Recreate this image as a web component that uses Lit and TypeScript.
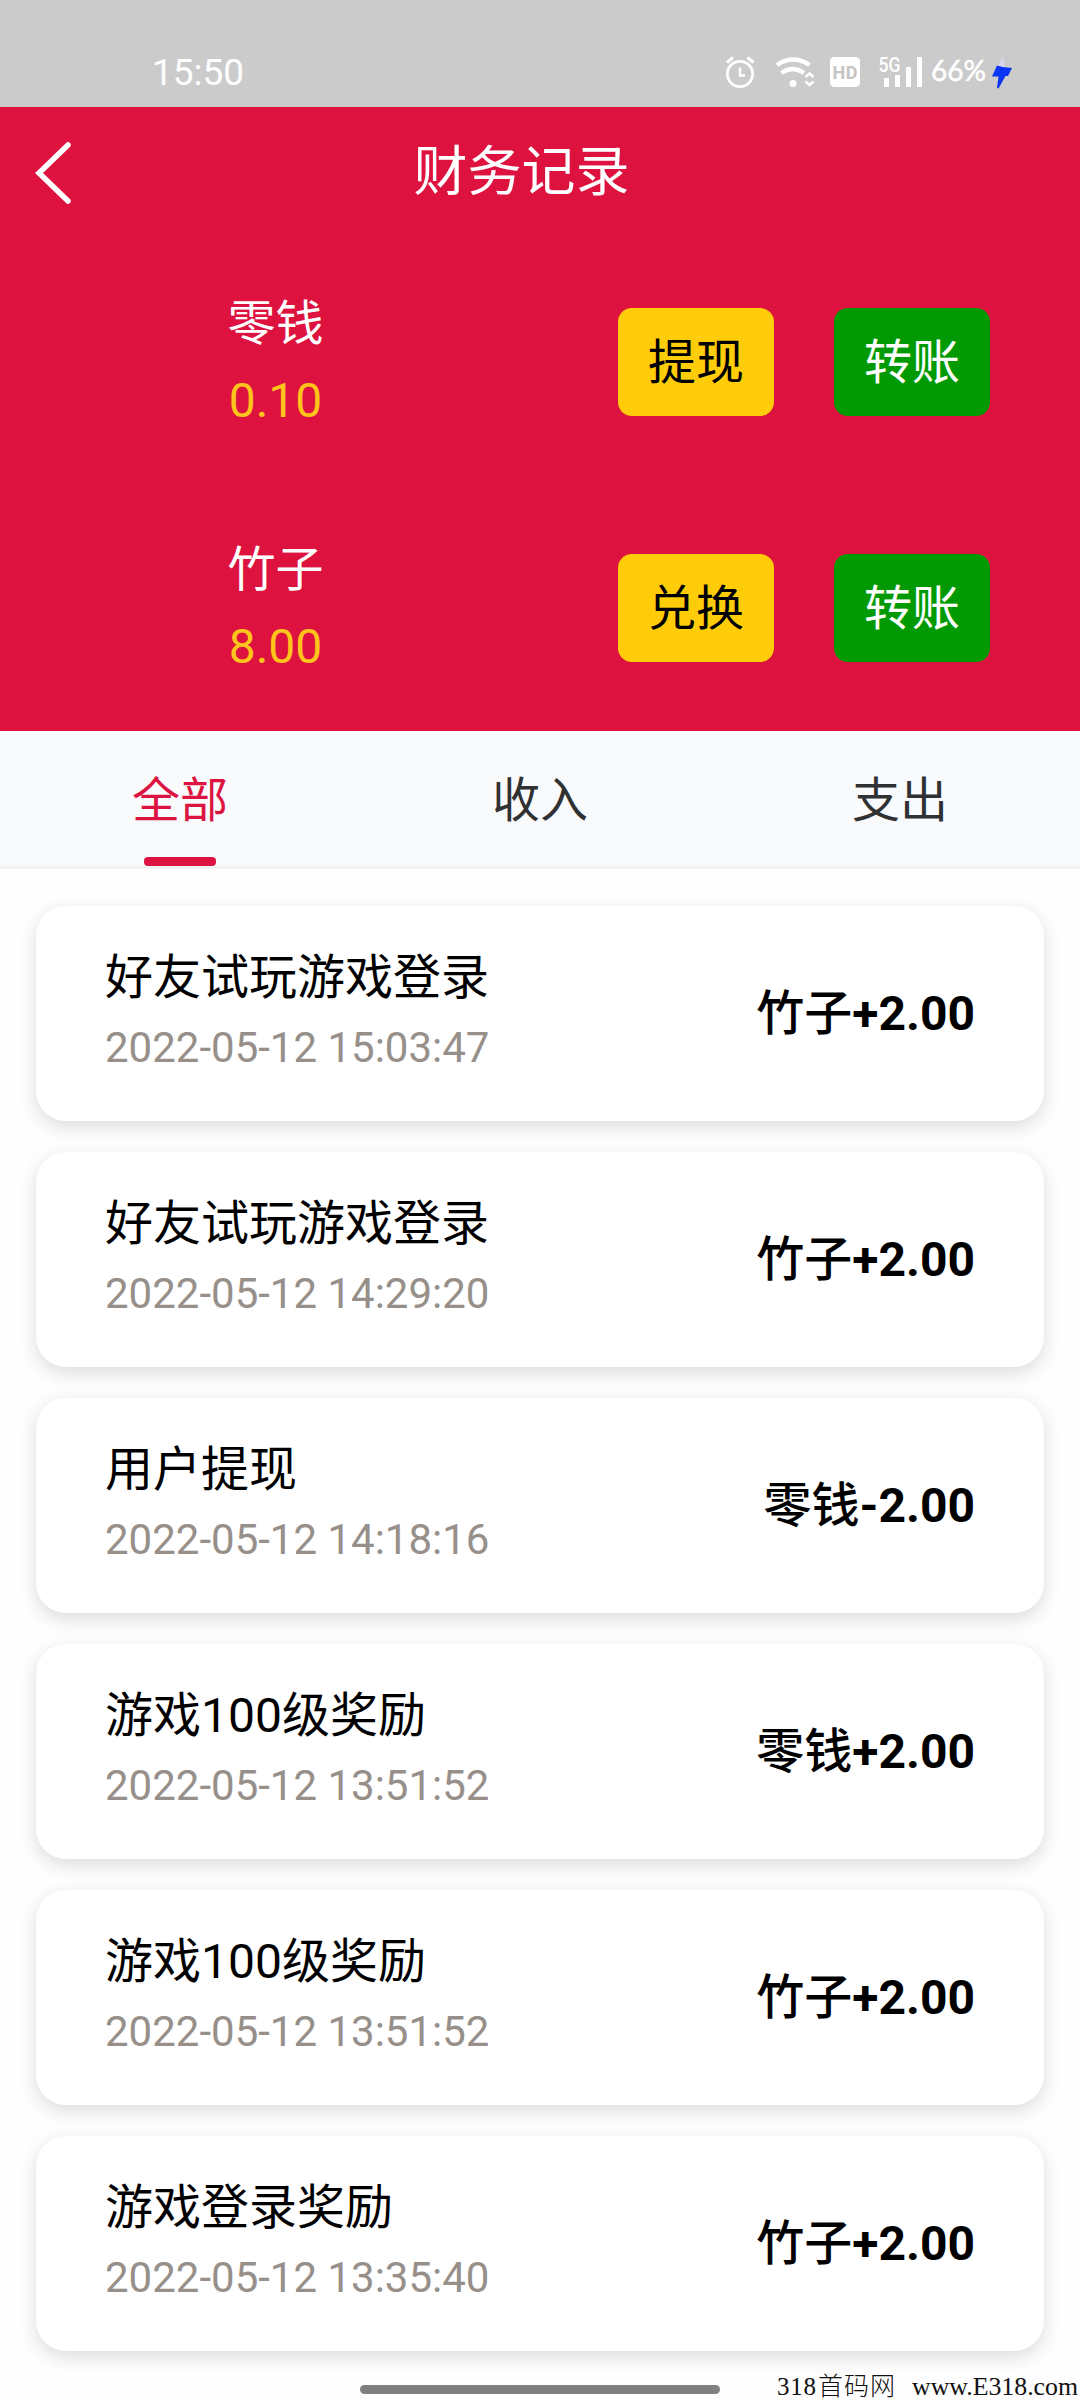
import { LitElement, html, svg, css } from "lit";
import { customElement, state } from "lit/decorators.js";

interface Account {
  name: string;
  balance: string;
  action: string;
}

interface Entry {
  title: string;
  time: string;
  amount: string;
}

const ACCOUNTS: Account[] = [
  { name: "零钱", balance: "0.10", action: "提现" },
  { name: "竹子", balance: "8.00", action: "兑换" },
];

const TABS = ["全部", "收入", "支出"];

const ENTRIES: Entry[] = [
  { title: "好友试玩游戏登录", time: "2022-05-12 15:03:47", amount: "竹子+2.00" },
  { title: "好友试玩游戏登录", time: "2022-05-12 14:29:20", amount: "竹子+2.00" },
  { title: "用户提现", time: "2022-05-12 14:18:16", amount: "零钱-2.00" },
  { title: "游戏100级奖励", time: "2022-05-12 13:51:52", amount: "零钱+2.00" },
  { title: "游戏100级奖励", time: "2022-05-12 13:51:52", amount: "竹子+2.00" },
  { title: "游戏登录奖励", time: "2022-05-12 13:35:40", amount: "竹子+2.00" },
];

@customElement("status-bar")
class StatusBar extends LitElement {
  static styles = css`
    :host {
      display: flex;
      justify-content: space-between;
      align-items: flex-end;
      box-sizing: border-box;
      height: 107px;
      padding: 0 60px 8px 152px;
      background: #cbcbcb;
      color: #fff;
    }
    .clock {
      font-size: 37px;
      line-height: 53px;
    }
    .icons {
      display: block;
      width: 320px;
      height: 60px;
    }
    .hd {
      font: 700 18px "Roboto", sans-serif;
      fill: #c4c4c4;
    }
    .net {
      font: 500 20px "Roboto", sans-serif;
      fill: #fff;
    }
    .pct {
      font: 400 28px "Lato", "Roboto", sans-serif;
      fill: #fff;
      stroke: #fff;
      stroke-width: 0.5;
    }
  `;

  render() {
    return html`
      <span class="clock">15:50</span>
      <svg class="icons" viewBox="700 39 320 60">
        ${svg`
          <g fill="none" stroke="#fff" stroke-width="2.8">
            <circle cx="740" cy="74" r="12.6" />
            <path d="M740 67.5v8h5" stroke-width="2.4" />
            <path d="M727 62.5l6-5M753.5 62.5l-6-5" stroke-width="3" />
            <path d="M777 65q16-11 32.500 0" stroke-width="4.200" />
            <path d="M781.500 73q11-8 22.500 0" stroke-width="4.200" />
            <path d="M805.500 77l4-3.500l4 3.500M805.500 81.500l4 3.500l4-3.500" stroke-width="2.800" />
          </g>
          <circle cx="793" cy="83.500" r="3.500" fill="#fff" />
          <rect x="830" y="57" width="30" height="30" rx="4.500" fill="#fff" />
          <text class="hd" x="832.500" y="78.500" textLength="25">HD</text>
          <text class="net" x="878.500" y="71.500" textLength="22" lengthAdjust="spacingAndGlyphs">5G</text>
          <g fill="#fff">
            <rect x="884" y="78" width="5" height="9" />
            <rect x="895" y="75" width="5" height="12" />
            <rect x="906" y="67" width="5" height="20" />
            <rect x="917" y="57" width="5" height="30" />
          </g>
          <text class="pct" x="931" y="81" textLength="55" lengthAdjust="spacingAndGlyphs">66%</text>
          <path d="M1003 56l2 12l-7-2z" fill="#d9d5ee" />
          <path d="M997 65.500l5.500 1.500l9.500 1l-4 8h-2.500l-7 12.500l-1.500-.500l1.500-11.500h-6.500z" fill="#0b35f5" />
        `}
      </svg>
    `;
  }
}

@customElement("account-row")
class AccountRow extends LitElement {
  static properties = { account: { attribute: false } };
  declare account: Account;

  static styles = css`
    :host {
      display: flex;
      align-items: center;
      justify-content: space-between;
      height: 246px;
      padding-right: 90px;
      font-size: 48px;
    }
    .info {
      width: 551px;
      text-align: center;
      line-height: 77px;
    }
    .name {
      color: #fff;
    }
    .balance {
      color: #fdc41c;
    }
    .actions {
      display: flex;
      gap: 60px;
    }
    .btn {
      width: 156px;
      height: 108px;
      padding: 2px 0 0;
      border: 0;
      border-radius: 14px;
      font: inherit;
      line-height: 106px;
      text-align: center;
    }
    .primary {
      background: #fecc09;
      color: #000;
    }
    .transfer {
      background: #029a04;
      color: #fff;
    }
  `;

  render() {
    return html`
      <div class="info">
        <div class="name">${this.account.name}</div>
        <div class="balance">${this.account.balance}</div>
      </div>
      <div class="actions">
        <button class="btn primary">${this.account.action}</button>
        <button class="btn transfer">转账</button>
      </div>
    `;
  }
}

@customElement("entry-card")
class EntryCard extends LitElement {
  static properties = { entry: { attribute: false } };
  declare entry: Entry;

  static styles = css`
    :host {
      display: flex;
      align-items: center;
      justify-content: space-between;
      box-sizing: border-box;
      height: 215px;
      padding: 0 69px 0 69px;
      border-radius: 30px;
      background: #fff;
      box-shadow: 0 6px 18px rgba(20, 24, 40, 0.15);
    }
    .info {
      padding-bottom: 2px;
    }
    .title {
      font-size: 48px;
      line-height: 70px;
      color: #000;
    }
    .time {
      font-size: 42px;
      line-height: 70px;
      color: #968f8a;
    }
    .amount {
      font-size: 48px;
      font-weight: 700;
      line-height: 70px;
      color: #000;
    }
    .unit {
      font-weight: 500;
    }
  `;

  render() {
    const { title, time, amount } = this.entry;
    return html`
      <div class="info">
        <div class="title">${title}</div>
        <div class="time">${time}</div>
      </div>
      <div class="amount"><span class="unit">${amount.slice(0, 2)}</span>${amount.slice(2)}</div>
    `;
  }
}

@customElement("app-root")
class AppRoot extends LitElement {
  @state() private active = 0;

  static styles = css`
    :host {
      display: block;
      position: relative;
      width: 1080px;
      height: 2400px;
      overflow: hidden;
      background: #fefefe;
      font-family: "Roboto", "Noto Sans CJK SC", sans-serif;
    }
    .header {
      background: #de123f;
    }
    .nav {
      display: grid;
      grid-template-columns: 100px 1fr 137px;
      align-items: center;
      height: 132px;
    }
    .back {
      display: block;
      width: 36px;
      height: 62px;
      margin-left: 35px;
    }
    .heading {
      margin: 0;
      font-size: 54px;
      font-weight: 400;
      line-height: 132px;
      text-align: center;
      color: #fff;
    }
    .tabs {
      display: grid;
      grid-template-columns: repeat(3, 1fr);
      box-sizing: border-box;
      height: 138px;
      border-bottom: 3px solid #f3f2f3;
      background: #f9fafc;
    }
    .tab {
      display: flex;
      flex-direction: column;
      align-items: center;
      padding-top: 14px;
      font-size: 48px;
      line-height: 112px;
      color: #303133;
    }
    .tab.active {
      color: #dc1441;
    }
    .tab.active::after {
      content: "";
      width: 72px;
      height: 9px;
      border-radius: 4px;
      background: #dc1441;
    }
    .list {
      display: flex;
      flex-direction: column;
      gap: 31px;
      padding: 37px 36px 0;
    }
    .home {
      position: absolute;
      left: 360px;
      top: 2385px;
      width: 360px;
      height: 9px;
      border-radius: 5px;
      background: #808080;
    }
    .mark {
      position: absolute;
      right: 0;
      bottom: 0;
      width: 310px;
      height: 40px;
      overflow: visible;
      font-family: "Liberation Serif", "Noto Sans CJK SC", serif;
      font-size: 25px;
      fill: #111;
    }
    .han {
      font-weight: 300;
    }
  `;

  render() {
    return html`
      <status-bar></status-bar>
      <div class="header">
        <div class="nav">
          <svg class="back" viewBox="0 0 36 62">
            <path d="M33 3L4 31L33 59" fill="none" stroke="#fff" stroke-width="5.500" stroke-linecap="round" />
          </svg>
          <h1 class="heading">财务记录</h1>
        </div>
        ${ACCOUNTS.map((a) => html`<account-row .account=${a}></account-row>`)}
      </div>
      <div class="tabs">
        ${TABS.map(
          (label, i) => html`
            <div class="tab ${i === this.active ? "active" : ""}" @click=${() => (this.active = i)}>${label}</div>
          `
        )}
      </div>
      <div class="list">${ENTRIES.map((e) => html`<entry-card .entry=${e}></entry-card>`)}</div>
      <div class="home"></div>
      <svg class="mark" viewBox="770 2360 310 40">
        ${svg`
          <text x="777" y="2394.500" textLength="39">318</text>
          <text class="han" x="818" y="2394.500" textLength="77">首码网</text>
          <text x="912" y="2394.500" textLength="166" lengthAdjust="spacingAndGlyphs">www.E318.com</text>
        `}
      </svg>
    `;
  }
}
